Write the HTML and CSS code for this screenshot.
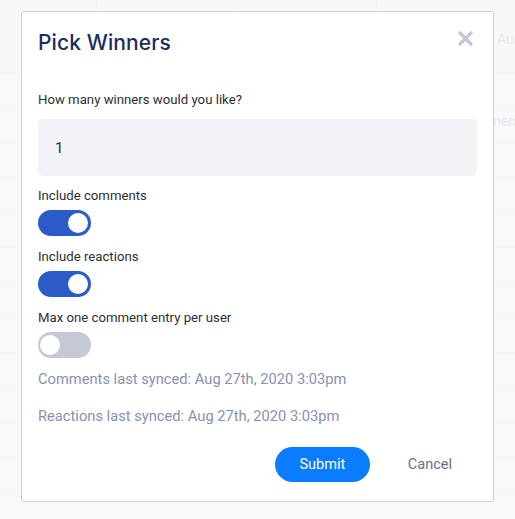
FILE: index.html
```html
<!DOCTYPE html>
<html lang="en">
<head>
<meta charset="utf-8">
<title>Pick Winners</title>
<link rel="stylesheet" href="styles.css">
</head>
<body>
<div class="page">
  <div class="bg-head">
    <div class="bg-col"></div>
    <div class="bg-col"></div>
    <div class="bg-col"></div>
    <div class="bg-col last"><span class="bg-text bg-aug">Aug</span></div>
  </div>
  <div class="bg-row"></div>
  <div class="bg-row"><span class="bg-text bg-ners">ners</span></div>
  <div class="bg-row"></div>
  <div class="bg-row"></div>
  <div class="bg-row"></div>
  <div class="bg-row"></div>
  <div class="bg-row"></div>
  <div class="bg-row"></div>
  <div class="bg-row"></div>
  <div class="bg-row"></div>
  <div class="bg-row"></div>
  <div class="bg-row"></div>

  <div class="modal">
    <div class="modal-head">
      <h2 class="title">Pick Winners</h2>
      <button class="close" aria-label="Close">
        <svg width="17" height="17" viewBox="0 0 17 17"><path d="M2 2 L15 15 M15 2 L2 15" stroke="#c3c7d2" stroke-width="3.2" stroke-linecap="butt"/></svg>
      </button>
    </div>
    <div class="field-label first">How many winners would you like?</div>
    <div class="input">1</div>

    <div class="field-label">Include comments</div>
    <div class="toggle on"><span class="knob"></span></div>

    <div class="field-label">Include reactions</div>
    <div class="toggle on"><span class="knob"></span></div>

    <div class="field-label">Max one comment entry per user</div>
    <div class="toggle off"><span class="knob"></span></div>

    <div class="synced first-synced">Comments last synced: Aug 27th, 2020 3:03pm</div>
    <div class="synced second-synced">Reactions last synced: Aug 27th, 2020 3:03pm</div>

    <div class="actions">
      <button class="btn-submit">Submit</button>
      <button class="btn-cancel">Cancel</button>
    </div>
  </div>
</div>
</body>
</html>
```
FILE: styles.css
```css
* { box-sizing: border-box; }
html, body { margin: 0; padding: 0; }
body {
  background: #f8f9fb;
  font-family: Roboto, "Liberation Sans", sans-serif;
  width: 515px;
  height: 519px;
  overflow: hidden;
}
.page {
  position: relative;
  width: 515px;
  height: 519px;
  overflow: hidden;
}
.bg-head {
  display: flex;
  height: 73px;
  background: #f7f8fa;
  border-bottom: 1px solid #f3f4f7;
}
.bg-col {
  width: 140px;
  border-right: 1px solid #f2f3f6;
  position: relative;
}
.bg-col:first-child { width: 97px; }
.bg-col.last { border-right: none; flex: 1; }
.bg-row {
  height: 35px;
  border-bottom: 1px solid #f4f5f8;
  position: relative;
}
.bg-text {
  position: absolute;
  color: #e6e8ef;
  font-size: 14px;
  line-height: 16px;
  white-space: nowrap;
}
.bg-aug { left: 120px; top: 31px; }
.bg-ners { left: 493px; top: 5px; }

.modal {
  position: absolute;
  left: 21px;
  top: 11px;
  width: 473px;
  height: 491px;
  background: #fff;
  border: 1px solid #cfd0d3;
  border-radius: 3px;
  padding: 16px 16px 0 16px;
  display: flex;
  flex-direction: column;
  align-items: stretch;
}
.modal-head {
  display: flex;
  justify-content: space-between;
  align-items: flex-start;
}
.title {
  margin: 0;
  font-family: Inter, "Open Sans", sans-serif;
  font-weight: 500;
  font-size: 21px;
  line-height: 30px;
  color: #1c2d5e;
  letter-spacing: 0.1px;
}
.close {
  border: none;
  background: none;
  padding: 0;
  margin: 2px 3px 0 0;
  width: 17px;
  height: 17px;
  display: block;
}
.close svg { display: block; }

.field-label {
  font-size: 13.2px;
  line-height: 20px;
  color: #2e2f33;
  margin-top: 11px;
}
.field-label.first { margin-top: 32px; }
.input {
  margin-top: 9px;
  height: 57px;
  width: 439px;
  background: #f2f3f7;
  border-radius: 5px;
  padding-left: 17px;
  display: flex;
  align-items: center;
  font-size: 15px;
  color: #1f2c58;
}
.input + .field-label { margin-top: 10px; }
.toggle {
  margin-top: 4px;
  width: 53px;
  height: 26px;
  border-radius: 13px;
  position: relative;
  flex: none;
}
.toggle.on { background: #2a5bc7; }
.toggle.off { background: #c5c9d6; }
.knob {
  position: absolute;
  top: 3px;
  width: 20px;
  height: 20px;
  border-radius: 50%;
  background: #fff;
}
.toggle.on .knob { right: 3px; }
.toggle.off .knob { left: 2px; }

.synced {
  font-size: 14.7px;
  line-height: 20px;
  color: #8891b0;
}
.first-synced { margin-top: 11px; }
.second-synced { margin-top: 17px; }

.actions {
  margin-top: 21px;
  display: flex;
  justify-content: flex-end;
  align-items: center;
}
.btn-submit {
  width: 95px;
  height: 35px;
  border: none;
  border-radius: 18px;
  background: #0a7cff;
  color: #fff;
  font-family: Roboto, "Liberation Sans", sans-serif;
  font-size: 14.5px;
  padding: 0;
}
.btn-cancel {
  margin-left: 14px;
  height: 35px;
  border: none;
  background: none;
  color: #6d717b;
  font-family: Roboto, "Liberation Sans", sans-serif;
  font-size: 14.5px;
  padding: 0 25px 0 24px;
}
```
